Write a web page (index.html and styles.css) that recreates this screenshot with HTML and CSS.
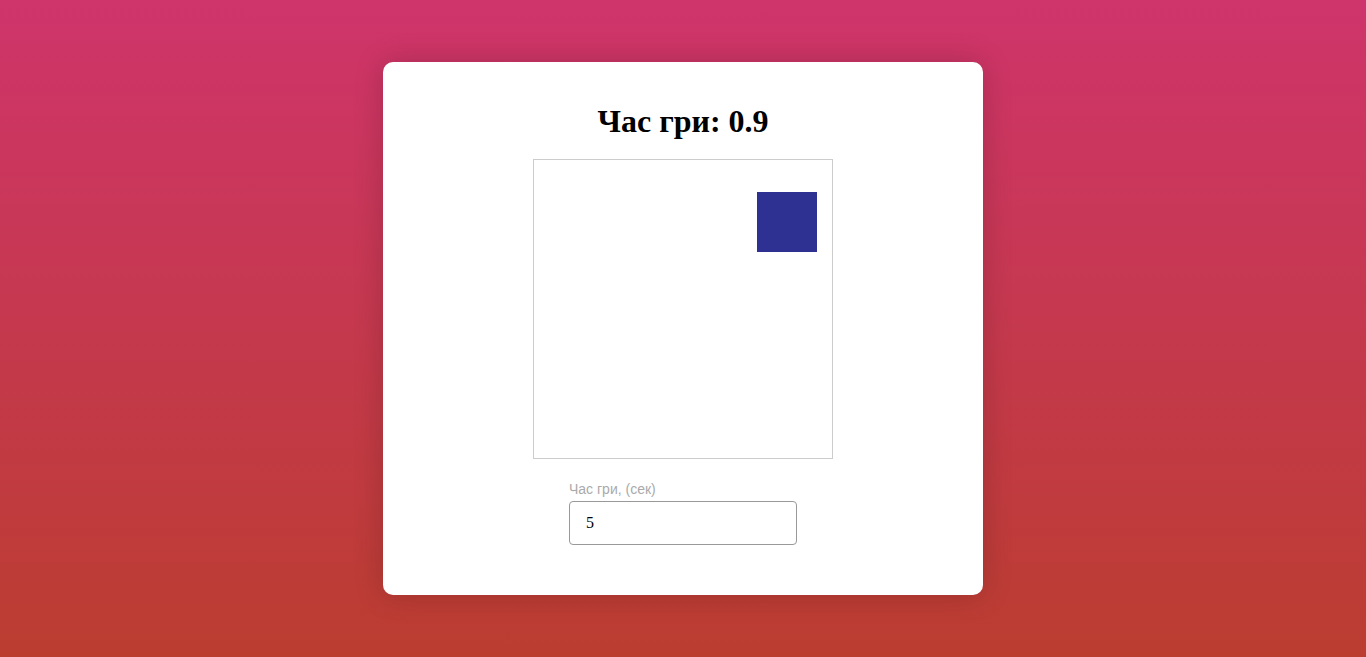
FILE: index.html
```html
<!DOCTYPE html>
<html lang="uk">
<head>
<meta charset="utf-8">
<title>Гра</title>
<link rel="stylesheet" href="styles.css">
</head>
<body>
<main class="card">
  <h1 class="title">Час гри: 0.9</h1>
  <div class="board">
    <div class="target"></div>
  </div>
  <div class="field">
    <label class="field-label" for="time">Час гри, (сек)</label>
    <input class="field-input" id="time" type="text" value="5">
  </div>
</main>
</body>
</html>
```
FILE: styles.css
```css
html, body {
  margin: 0;
  height: 100%;
}
body {
  background: linear-gradient(to bottom, #cf346b, #bb3d30);
  display: flex;
  align-items: center;
  justify-content: center;
  font-family: "Liberation Serif", serif;
}
.card {
  box-sizing: border-box;
  width: 600px;
  height: 533px;
  background: #fff;
  border-radius: 10px;
  box-shadow: 0 0 30px rgba(0, 0, 0, 0.18);
  padding: 41px 0 0;
  display: flex;
  flex-direction: column;
  align-items: center;
}
.title {
  margin: 0;
  font-family: "Liberation Serif", serif;
  font-weight: bold;
  font-size: 32px;
  line-height: 37px;
  color: #000;
}
.board {
  box-sizing: border-box;
  margin-top: 19px;
  width: 300px;
  height: 300px;
  border: 1px solid #ccc;
  padding: 32px 15px 0 0;
  display: flex;
  justify-content: flex-end;
  align-items: flex-start;
}
.target {
  width: 60px;
  height: 60px;
  background: #2e3192;
}
.field {
  margin-top: 22px;
  width: 228px;
  display: flex;
  flex-direction: column;
}
.field-label {
  font-family: "Liberation Sans", Arial, sans-serif;
  font-size: 14px;
  line-height: 16px;
  color: #aaa;
  margin-bottom: 4px;
}
.field-input {
  box-sizing: border-box;
  width: 228px;
  height: 44px;
  border: 1px solid #999;
  border-radius: 4px;
  padding: 0 16px;
  font-family: "Liberation Serif", serif;
  font-size: 16px;
  color: #000;
  outline: none;
}
```
